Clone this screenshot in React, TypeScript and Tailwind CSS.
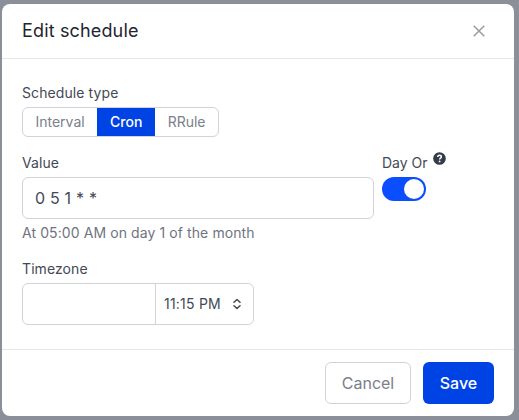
import { useState } from "react";

const types = ["Interval", "Cron", "RRule"];

function CloseIcon() {
  return (
    <svg viewBox="0 0 12 12" className="size-3" fill="none" stroke="#9a9ca1" strokeWidth="1.5">
      <path d="M.7 .7 11.3 11.3M11.3 .7 .7 11.3" />
    </svg>
  );
}

function HelpIcon() {
  return (
    <svg viewBox="0 0 14 14" className="size-[13px]">
      <circle cx="7" cy="7" r="6.8" fill="#343b49" />
      <path
        d="M5 5.4c.1-1.2.9-1.8 2-1.8s2 .7 2 1.7c0 1.4-1.9 1.3-1.9 2.8"
        fill="none"
        stroke="#fff"
        strokeWidth="1.6"
      />
      <circle cx="7.1" cy="10.1" r="1" fill="#fff" />
    </svg>
  );
}

function SelectorIcon() {
  return (
    <svg viewBox="0 0 8 12" className="h-3 w-2" fill="none" stroke="#3f4552" strokeWidth="1.5" strokeLinejoin="round" strokeLinecap="round">
      <path d="M1 4.2 4 1.5 7 4.2M1 7.8l3 2.7 3-2.7" />
    </svg>
  );
}

export default function App() {
  const [type, setType] = useState("Cron");
  const [dayOr, setDayOr] = useState(true);
  return (
    <div className="h-[420px] w-[519px] bg-[#8b8f9a] pt-1 pl-0.5 font-['Inter',sans-serif] text-sm text-[#434956]">
      <div className="flex h-[412px] w-[512px] flex-col rounded-lg bg-white">
        <header className="flex h-[55px] items-center justify-between border-b border-[#e5e7eb] pr-[29px] pl-5">
          <h1 className="text-lg tracking-[0.15px] text-[#1f2430]">Edit schedule</h1>
          <button aria-label="Close">
            <CloseIcon />
          </button>
        </header>

        <main className="flex-1 px-5 pt-6">
          <div className="leading-5 tracking-[0.09px]">Schedule type</div>
          <div className="mt-1 flex h-[30px] w-[197px] overflow-hidden rounded-md border border-[#d1d3d9]">
            {types.map((t) => (
              <button
                key={t}
                onClick={() => setType(t)}
                className={
                  t === type
                    ? "-my-px w-[58px] bg-[#0043e5] font-medium text-white"
                    : "flex-auto text-[#7b808b]"
                }
              >
                {t}
              </button>
            ))}
          </div>

          <div className="mt-4 flex gap-2">
            <label className="block w-[352px]">
              <span className="block leading-5 tracking-[0.09px]">Value</span>
              <input
                defaultValue="0 5 1 * *"
                className="mt-1 block h-[42px] w-full rounded-md border border-[#d1d3d9] px-3 text-base tracking-[0.2px] outline-none"
              />
            </label>
            <div>
              <div className="flex h-5 gap-[5px] leading-5">
                Day Or
                <span className="-mt-px">
                  <HelpIcon />
                </span>
              </div>
              <button
                role="switch"
                aria-checked={dayOr}
                aria-label="Day Or"
                onClick={() => setDayOr(!dayOr)}
                className={
                  dayOr
                    ? "mt-1 flex h-6 w-11 items-center justify-end rounded-full bg-[#0b4eff] p-0.5"
                    : "mt-1 flex h-6 w-11 items-center rounded-full bg-gray-300 p-0.5"
                }
              >
                <span className="size-5 rounded-full bg-white" />
              </button>
            </div>
          </div>
          <p className="mt-1 leading-5 tracking-[0.09px] text-[#6f7480]">At 05:00 AM on day 1 of the month</p>

          <div className="mt-4 leading-5 tracking-[0.09px]">Timezone</div>
          <div className="mt-1 flex h-[42px] w-[232px] rounded-md border border-[#d1d3d9]">
            <input aria-label="Timezone" className="w-[133px] min-w-0 rounded-l-md border-r border-[#d1d3d9] px-3 outline-none" />
            <button className="flex flex-1 items-center justify-between pr-3 pl-2 tracking-[0.22px]">
              11:15 PM
              <SelectorIcon />
            </button>
          </div>
        </main>

        <footer className="flex h-[67px] items-center justify-end gap-3 border-t border-[#e5e7eb] px-5 text-base">
          <button className="h-[42px] w-[86px] rounded-md border border-[#d1d3d9] text-[#7b808b]">Cancel</button>
          <button className="h-[42px] w-[71px] rounded-md bg-[#0043e5] font-medium text-white">Save</button>
        </footer>
      </div>
    </div>
  );
}
